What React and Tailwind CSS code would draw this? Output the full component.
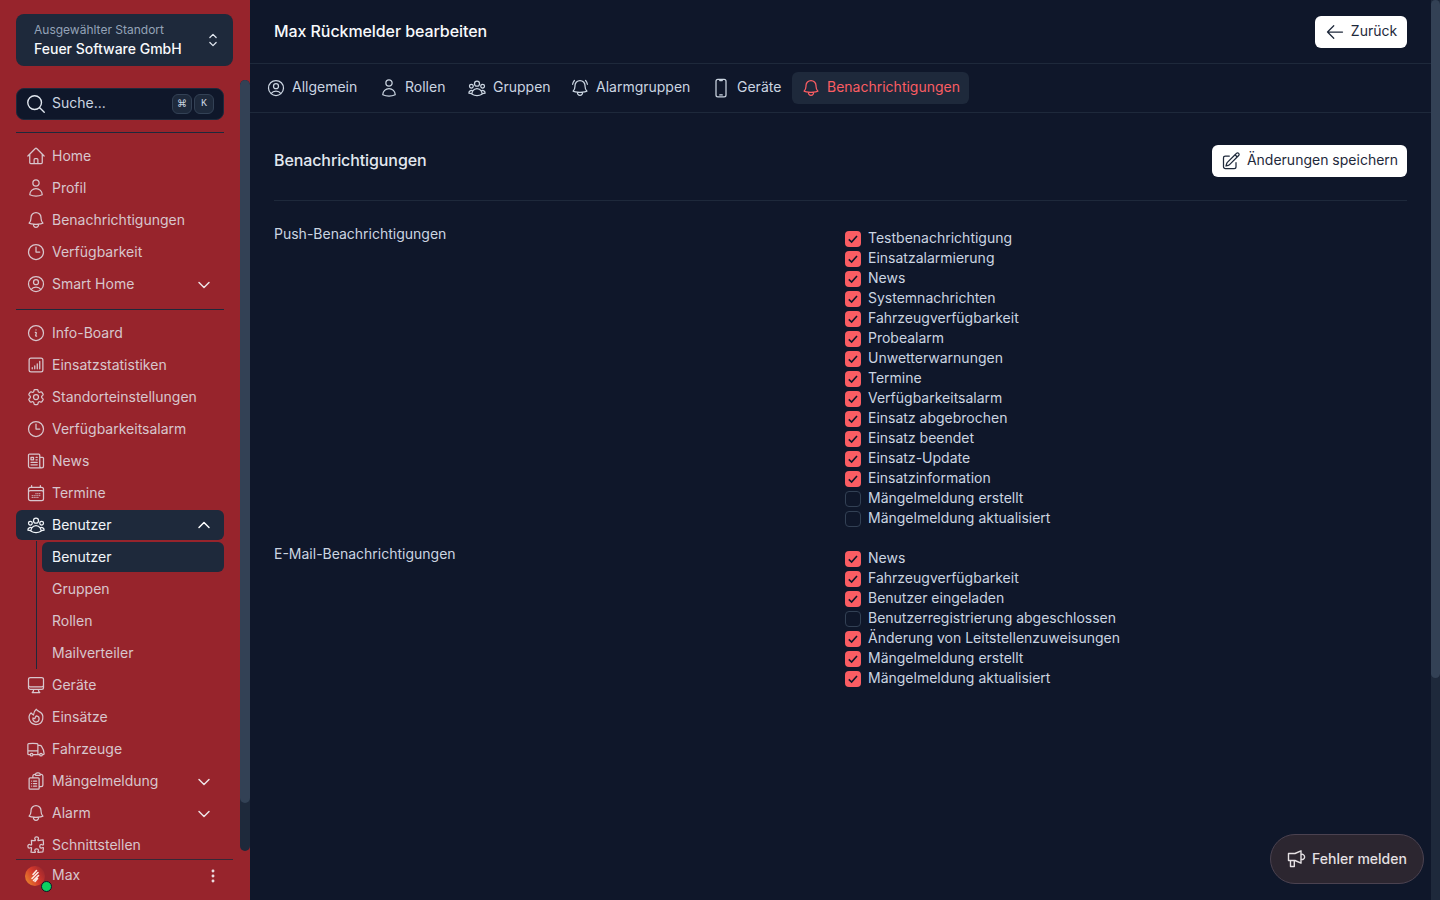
import {
  HiOutlineHome,
  HiOutlineUser,
  HiOutlineBell,
  HiOutlineClock,
  HiOutlineUserCircle,
  HiOutlineInformationCircle,
  HiOutlineCog6Tooth,
  HiOutlineNewspaper,
  HiOutlineCalendarDays,
  HiOutlineUserGroup,
  HiOutlineComputerDesktop,
  HiOutlineFire,
  HiOutlineTruck,
  HiOutlineClipboardDocumentList,
  HiOutlinePuzzlePiece,
  HiOutlineBellAlert,
  HiOutlineDevicePhoneMobile,
  HiOutlinePencilSquare,
  HiOutlineArrowLeft,
  HiOutlineMagnifyingGlass,
  HiOutlineChevronUpDown,
  HiOutlineChevronDown,
  HiOutlineChevronUp,
  HiOutlineEllipsisVertical,
} from "react-icons/hi2";

function StatsIcon({ className }) {
  return (
    <svg viewBox="0 0 24 24" fill="none" stroke="currentColor" strokeWidth="1.5" strokeLinecap="round" className={className}>
      <rect x="3.75" y="3.75" width="16.5" height="16.5" rx="2.25" />
      <path d="M7.5 16.5v-1.5M10.5 16.5v-3.5M13.5 16.5v-6M16.5 16.5V7.5" />
    </svg>
  );
}

function PuzzleIcon({ className }) {
  return <HiOutlinePuzzlePiece className={className} preserveAspectRatio="none" />;
}

function MegaphoneIcon({ className }) {
  return (
    <svg viewBox="0 0 20 20" fill="none" stroke="currentColor" strokeWidth="1.4" strokeLinejoin="round" className={className}>
      <path d="M1.5 4.5H8L14 1.8v12.4L8 11.5H1.5z" />
      <path d="M3.5 11.5v6h3.8v-6" />
      <path d="M14 5.6a2.5 2.5 0 0 1 3.6 2.3 2.5 2.5 0 0 1-3.6 2.3" />
    </svg>
  );
}

const navTop = [
  { label: "Home", icon: HiOutlineHome },
  { label: "Profil", icon: HiOutlineUser },
  { label: "Benachrichtigungen", icon: HiOutlineBell },
  { label: "Verfügbarkeit", icon: HiOutlineClock },
  { label: "Smart Home", icon: HiOutlineUserCircle, chevron: true },
];

const navAdmin = [
  { label: "Info-Board", icon: HiOutlineInformationCircle },
  { label: "Einsatzstatistiken", icon: StatsIcon },
  { label: "Standorteinstellungen", icon: HiOutlineCog6Tooth },
  { label: "Verfügbarkeitsalarm", icon: HiOutlineClock },
  { label: "News", icon: HiOutlineNewspaper },
  { label: "Termine", icon: HiOutlineCalendarDays },
];

const navRest = [
  { label: "Geräte", icon: HiOutlineComputerDesktop },
  { label: "Einsätze", icon: HiOutlineFire },
  { label: "Fahrzeuge", icon: HiOutlineTruck },
  { label: "Mängelmeldung", icon: HiOutlineClipboardDocumentList, chevron: true },
  { label: "Alarm", icon: HiOutlineBell, chevron: true },
  { label: "Schnittstellen", icon: PuzzleIcon },
];

const tabs = [
  { label: "Allgemein", icon: HiOutlineUserCircle, width: "w-[113px]" },
  { label: "Rollen", icon: HiOutlineUser, width: "w-[88px]" },
  { label: "Gruppen", icon: HiOutlineUserGroup, width: "w-[103px]" },
  { label: "Alarmgruppen", icon: HiOutlineBellAlert, width: "w-[141px]" },
  { label: "Geräte", icon: HiOutlineDevicePhoneMobile, width: "w-[90px]" },
];

const pushItems = [
  ["Testbenachrichtigung", true],
  ["Einsatzalarmierung", true],
  ["News", true],
  ["Systemnachrichten", true],
  ["Fahrzeugverfügbarkeit", true],
  ["Probealarm", true],
  ["Unwetterwarnungen", true],
  ["Termine", true],
  ["Verfügbarkeitsalarm", true],
  ["Einsatz abgebrochen", true],
  ["Einsatz beendet", true],
  ["Einsatz-Update", true],
  ["Einsatzinformation", true],
  ["Mängelmeldung erstellt", false],
  ["Mängelmeldung aktualisiert", false],
];

const mailItems = [
  ["News", true],
  ["Fahrzeugverfügbarkeit", true],
  ["Benutzer eingeladen", true],
  ["Benutzerregistrierung abgeschlossen", false],
  ["Änderung von Leitstellenzuweisungen", true],
  ["Mängelmeldung erstellt", true],
  ["Mängelmeldung aktualisiert", true],
];

function NavItem({ item }) {
  const Icon = item.icon;
  return (
    <div className="flex h-8 items-center gap-1.5 px-2.5 text-[#d8c6cd]">
      <Icon className="h-5 w-5 shrink-0" />
      <span className="flex-1 truncate">{item.label}</span>
      {item.chevron && <HiOutlineChevronDown className="mr-0.5 mt-0.5 h-4 w-4 text-[#eee3e6]" strokeWidth={2.2} />}
    </div>
  );
}

function SubItem({ label, active }) {
  return (
    <div className="flex h-8 items-center">
      <div className={`flex h-[30px] w-full items-center rounded-md px-2.5 ${active ? "bg-[#1e293b] text-[#f1f5f9]" : "text-[#d8c6cd]"}`}>
        {label}
      </div>
    </div>
  );
}

function Sidebar() {
  return (
    <aside className="flex h-full w-[250px] shrink-0 flex-col bg-[#97242c] text-sm">
      <div className="mx-4 mt-3.5 flex h-[52px] w-[217px] shrink-0 items-center justify-between rounded-lg bg-[#1e293b] pl-[18px] pr-2.5">
        <div>
          <div className="text-xs leading-4 text-[#94a3b8]">Ausgewählter Standort</div>
          <div className="pt-px text-sm font-medium leading-5 text-[#f8fafc]">Feuer Software GmbH</div>
        </div>
        <HiOutlineChevronUpDown className="h-5 w-5 text-[#e2e8f0]" />
      </div>

      <div className="flex min-h-0 flex-1">
        <div className="ml-4 mt-[14px] w-[208px] shrink-0 overflow-hidden">
          <div className="mt-2 flex h-8 items-center gap-[5px] rounded-lg border border-[#1e293b] bg-[#0f172a] pl-2 pr-[9px] text-[#cbd5e1]">
            <HiOutlineMagnifyingGlass className="h-[22px] w-[22px] shrink-0 text-[#e2e8f0]" />
            <span className="flex-1 pb-0.5">Suche...</span>
            <div className="flex gap-0.5">
              <kbd className="flex h-5 w-5 items-center justify-center rounded-md border border-[#334155] bg-[#1e293b] font-['DejaVu_Sans',sans-serif] text-[10px] text-[#cbd5e1]">⌘</kbd>
              <kbd className="flex h-5 w-5 items-center justify-center rounded-md border border-[#334155] bg-[#1e293b] text-[10px] font-medium text-[#cbd5e1]">K</kbd>
            </div>
          </div>
          <div className="mb-[7px] mt-3 h-px bg-[#1e293b]" />
          {navTop.map((item) => (
            <NavItem key={item.label} item={item} />
          ))}
          <div className="mb-[7px] mt-[9px] h-px bg-[#1e293b]" />
          {navAdmin.map((item) => (
            <NavItem key={item.label} item={item} />
          ))}
          <div className="my-px flex h-[30px] items-center gap-1.5 rounded-md bg-[#1e293b] px-2.5 text-[#f1f5f9]">
            <HiOutlineUserGroup className="h-5 w-5 shrink-0" />
            <span className="flex-1">Benutzer</span>
            <HiOutlineChevronUp className="mr-0.5 h-4 w-4 text-white" strokeWidth={2.2} />
          </div>
          <div className="ml-5 border-l border-[#1e293b] pl-[5px]">
            <SubItem label="Benutzer" active />
            <SubItem label="Gruppen" />
            <SubItem label="Rollen" />
            <SubItem label="Mailverteiler" />
          </div>
          {navRest.map((item) => (
            <NavItem key={item.label} item={item} />
          ))}
        </div>
        <div className="ml-4 mt-[14px] flex h-[771px] w-2.5 shrink-0 flex-col overflow-hidden rounded-md bg-[#1e293b]">
          <div className="h-[723px] rounded-md bg-[#334155]" />
        </div>
      </div>

      <div className="mx-4 flex h-[41px] w-[217px] shrink-0 items-start border-t border-[#1e293b]/80 pt-1">
        <div className="relative ml-[9px] mt-0.5 h-5 w-5 shrink-0">
          <svg viewBox="0 0 20 20" className="h-5 w-5">
            <defs>
              <linearGradient id="avatarFill" x1="0" y1="0.8" x2="1" y2="0.2">
                <stop offset="0" stopColor="#e9882c" />
                <stop offset="0.5" stopColor="#d5382c" />
                <stop offset="1" stopColor="#98262d" />
              </linearGradient>
            </defs>
            <circle cx="10" cy="10" r="10" fill="url(#avatarFill)" />
            <path d="M11.5 4.5 8 8.5M13 6.5l-6 6M13.5 9.5l-5 5M12.5 12.5l-2.5 3" stroke="#fbe7e0" strokeWidth="1.6" strokeLinecap="round" />
          </svg>
          <span className="absolute -bottom-[6px] -right-[7px] h-[11px] w-[11px] rounded-full border border-[#0f172a] bg-[#0cd162]" />
        </div>
        <span className="ml-[7px] mt-px flex-1 leading-5 text-[#d8c6cd]">Max</span>
        <HiOutlineEllipsisVertical className="mr-2.5 mt-0.5 h-5 w-5 text-[#eee3e6]" strokeWidth={2} />
      </div>
    </aside>
  );
}

function CheckRow({ label, checked }) {
  return (
    <div className="flex h-5 items-center gap-[7px] text-[#cbd5e1]">
      {checked ? (
        <span className="flex h-4 w-4 shrink-0 translate-y-px items-center justify-center rounded bg-[#fa5d63]">
          <svg viewBox="0 0 16 16" fill="none" stroke="#0f172a" strokeWidth="1.6" className="h-4 w-4">
            <path d="M3.8 8.4 6.6 11l5.4-6" />
          </svg>
        </span>
      ) : (
        <span className="h-4 w-4 shrink-0 translate-y-px rounded border border-[#334155] bg-[#0f172a]" />
      )}
      <span>{label}</span>
    </div>
  );
}

function Section({ title, items }) {
  return (
    <div className="grid grid-cols-[571px_1fr] pb-4">
      <div className="leading-5 text-[#cbd5e1]">{title}</div>
      <div className="pt-1">
        {items.map(([label, checked]) => (
          <CheckRow key={label} label={label} checked={checked} />
        ))}
      </div>
    </div>
  );
}

export default function App() {
  return (
    <div className="relative flex h-screen overflow-hidden bg-[#0f172a] font-['Inter',sans-serif] text-sm">
      <Sidebar />
      <main className="flex min-w-0 flex-1 flex-col">
        <header className="flex h-16 shrink-0 items-center justify-between border-b border-[#1e293b] pl-6 pr-6">
          <h1 className="pb-0.5 text-base font-medium tracking-[-0.08px] text-[#f8fafc]">Max Rückmelder bearbeiten</h1>
          <button className="flex h-8 w-[92px] items-center justify-center gap-1.5 rounded-md bg-white text-[#1e293b]">
            <HiOutlineArrowLeft className="h-5 w-5" />
            <span className="pb-0.5">Zurück</span>
          </button>
        </header>
        <nav className="flex h-[49px] shrink-0 items-center border-b border-[#1e293b] pl-[7px] text-[#cbd5e1]">
          {tabs.map((t) => {
            const Icon = t.icon;
            return (
              <div key={t.label} className={`flex h-8 items-center gap-1.5 pl-[9px] ${t.width}`}>
                <Icon className="h-5 w-5 shrink-0" />
                <span className="pb-0.5">{t.label}</span>
              </div>
            );
          })}
          <div className="flex h-8 w-[177px] items-center gap-1.5 rounded-md bg-[#1e293b] pl-[9px] text-[#fa5d63]">
            <HiOutlineBell className="h-5 w-5 shrink-0" />
            <span className="pb-0.5">Benachrichtigungen</span>
          </div>
        </nav>
        <section className="px-6 pt-8">
          <div className="flex h-8 items-center justify-between">
            <h2 className="pb-0.5 text-base font-medium tracking-[-0.1px] text-[#e2e8f0]">Benachrichtigungen</h2>
            <button className="flex h-8 w-[195px] items-center justify-center gap-1.5 rounded-md bg-white text-[#1e293b]">
              <HiOutlinePencilSquare className="h-5 w-5" />
              <span className="pb-0.5">Änderungen speichern</span>
            </button>
          </div>
          <div className="mb-[23px] mt-[23px] h-px bg-[#1e293b]" />
          <Section title="Push-Benachrichtigungen" items={pushItems} />
          <Section title="E-Mail-Benachrichtigungen" items={mailItems} />
        </section>
      </main>
      <div className="flex h-full w-[9px] shrink-0 flex-col bg-[#1e293b]">
        <div className="h-[678px] rounded-md bg-[#334155]" />
      </div>
      <button className="absolute bottom-4 right-4 flex h-[50px] w-[154px] items-center justify-center gap-[5px] rounded-full border border-[#4b4250] bg-[#2c2630] font-medium text-[#e5e0e3]">
        <MegaphoneIcon className="h-5 w-5" />
        Fehler melden
      </button>
    </div>
  );
}
